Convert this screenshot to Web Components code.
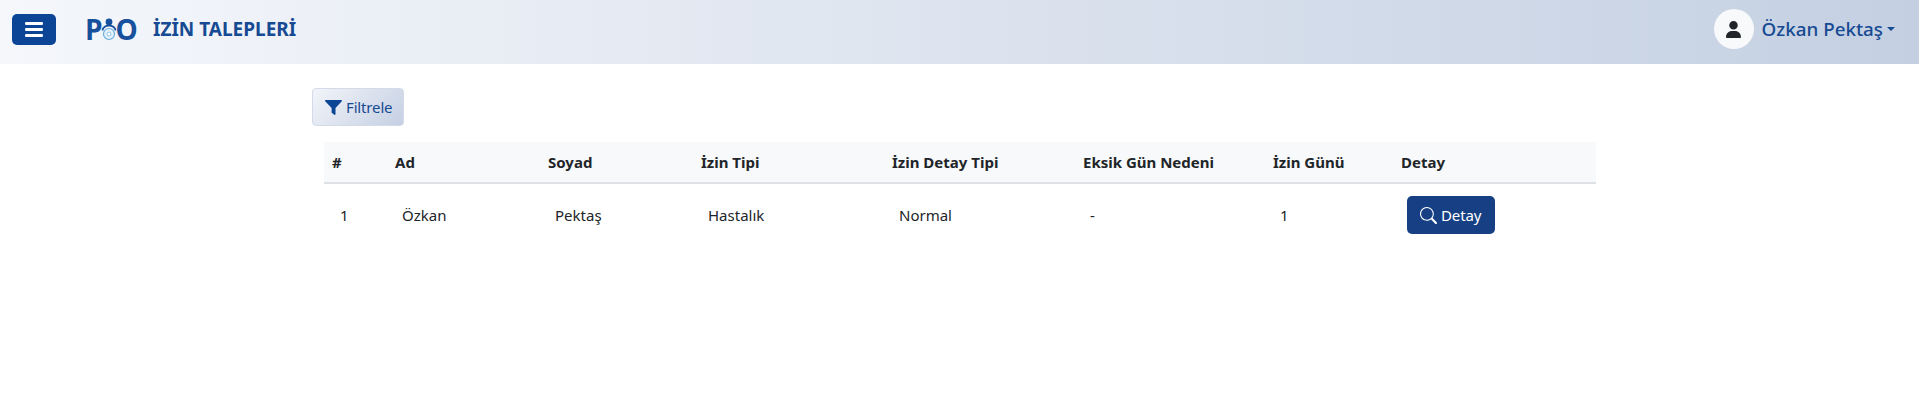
<!DOCTYPE html>
<html lang="tr">
<head>
<meta charset="utf-8">
<title>İzin Talepleri</title>
<style>
    html, body { margin: 0; background: #fff; }
    body { font-family: "Noto Sans", "Open Sans", sans-serif; color: #212529; }
</style>
</head>
<body>
<app-navbar title-text="İZİN TALEPLERİ" user-name="Özkan Pektaş"></app-navbar>
<leave-page></leave-page>

<script>
class AppNavbar extends HTMLElement {
    constructor() {
        super();
        this.attachShadow({ mode: 'open' });
    }

    connectedCallback() {
        this.shadowRoot.innerHTML = `
            <style>
                :host {
                    display: flex;
                    align-items: center;
                    height: 64px;
                    padding: 0 12px 6px;
                    box-sizing: border-box;
                    background: linear-gradient(to right, #f5f7fb, #c4d0e2);
                }
                .menu {
                    width: 44px;
                    height: 31px;
                    background: #0d4596;
                    border-radius: 5px;
                    display: grid;
                    place-items: center;
                    margin-right: 29px;
                }
                .title {
                    margin-left: 16px;
                    font-size: 19px;
                    font-weight: 700;
                    color: #164a92;
                    white-space: nowrap;
                }
                .spacer { flex: 1; }
            </style>
            <div class="menu">
                <svg width="18" height="15" viewBox="0 0 18 15" fill="#fff">
                    <rect y="0" width="18" height="3" rx="1.2"/>
                    <rect y="6" width="18" height="3" rx="1.2"/>
                    <rect y="12" width="18" height="3" rx="1.2"/>
                </svg>
            </div>
            <brand-logo></brand-logo>
            <span class="title">${this.getAttribute('title-text')}</span>
            <span class="spacer"></span>
            <user-menu name="${this.getAttribute('user-name')}"></user-menu>
        `;
    }
}

class BrandLogo extends HTMLElement {
    constructor() {
        super();
        this.attachShadow({ mode: 'open' });
        this.shadowRoot.innerHTML = `
            <style>
                :host {
                    display: inline-flex;
                    align-items: center;
                    height: 30px;
                    width: 52px;
                    color: #17509c;
                    font: 700 28px/30px "Open Sans", "Noto Sans", sans-serif;
                }
                svg { margin: 0 -2px 0 -3px; flex: none; }
            </style>
            <span>P</span>
            <svg width="18" height="24" viewBox="0 0 18 24">
                <circle cx="9" cy="5" r="3.4" fill="#17509c"/>
                <path d="M2.500 13.500a6.500 5 0 0 1 13 0" fill="none" stroke="#17509c" stroke-width="1.800"/>
                <circle cx="9" cy="17" r="5.500" fill="#e4f1fa" stroke="#6aaedd" stroke-width="1.200"/>
                <circle cx="9" cy="17" r="2" fill="#fff" stroke="#8fc2e4"/>
            </svg>
            <span>O</span>
        `;
    }
}

class UserMenu extends HTMLElement {
    constructor() {
        super();
        this.attachShadow({ mode: 'open' });
    }

    connectedCallback() {
        this.shadowRoot.innerHTML = `
            <style>
                :host {
                    display: inline-flex;
                    align-items: center;
                    margin-right: 12px;
                    color: #164a92;
                    font-size: 18.8px;
                    font-weight: 500;
                    white-space: nowrap;
                }
                .avatar {
                    width: 40px;
                    height: 40px;
                    border-radius: 50%;
                    background: #f8f9fa;
                    display: grid;
                    place-items: center;
                    margin-right: 8px;
                }
                .caret {
                    width: 0;
                    height: 0;
                    margin-left: 4px;
                    border-top: 4.500px solid currentColor;
                    border-left: 4.500px solid transparent;
                    border-right: 4.500px solid transparent;
                }
            </style>
            <span class="avatar">
                <svg width="15" height="17" viewBox="0 0 448 512" fill="#212529">
                    <path d="M224 256a128 128 0 1 0 0-256 128 128 0 1 0 0 256zm-45.700 48C79.800 304 0 383.800 0 482.300 0 498.700 13.300 512 29.700 512h388.600c16.400 0 29.700-13.300 29.700-29.700 0-98.500-79.800-178.300-178.300-178.300h-91.400z"/>
                </svg>
            </span>
            <span>${this.getAttribute('name')}</span>
            <span class="caret"></span>
        `;
    }
}

class FilterButton extends HTMLElement {
    constructor() {
        super();
        this.attachShadow({ mode: 'open' });
        this.shadowRoot.innerHTML = `
            <style>
                :host {
                    display: inline-flex;
                    align-items: center;
                    gap: 4px;
                    height: 38px;
                    width: 92px;
                    padding: 0 0 0 12px;
                    box-sizing: border-box;
                    border: 1px solid #d3dbe8;
                    border-radius: 4px;
                    background: linear-gradient(135deg, #f2f4f9, #c5d0e3);
                    color: #164a92;
                    font-size: 15px;
                    letter-spacing: -0.15px;
                }
            </style>
            <svg width="17" height="15" viewBox="0 0 17 15" fill="#0d4596">
                <path d="M0.800 0h15.400c.7 0 1 .8.600 1.300L10.500 8v6.200c0 .6-.7 1-1.200.6l-2.300-1.800c-.2-.2-.4-.4-.4-.7V8L.2 1.300C-.2.800.1 0 .8 0z"/>
            </svg>
            <slot></slot>
        `;
    }
}

class DetailButton extends HTMLElement {
    constructor() {
        super();
        this.attachShadow({ mode: 'open' });
        this.shadowRoot.innerHTML = `
            <style>
                :host {
                    display: inline-flex;
                    align-items: center;
                    gap: 4px;
                    height: 38px;
                    width: 88px;
                    padding: 0 0 0 13px;
                    box-sizing: border-box;
                    border-radius: 5px;
                    background: #174084;
                    color: #fff;
                    font-size: 15px;
                    letter-spacing: -0.1px;
                }
            </style>
            <svg width="17" height="17" viewBox="0 0 16 16" fill="#fff">
                <path d="M11.742 10.344a6.500 6.500 0 1 0-1.397 1.398h-.001c.03.040.062.078.098.115l3.850 3.850a1 1 0 0 0 1.415-1.414l-3.850-3.850a1.007 1.007 0 0 0-.115-.100zM12 6.500a5.500 5.500 0 1 1-11 0 5.500 5.500 0 0 1 11 0z"/>
            </svg>
            <slot></slot>
        `;
    }
}

class LeaveTable extends HTMLElement {
    constructor() {
        super();
        this.attachShadow({ mode: 'open' });
        this.shadowRoot.innerHTML = `
            <style>
                :host { display: block; font-size: 15px; }
                table {
                    width: 100%;
                    table-layout: fixed;
                    border-collapse: separate;
                    border-spacing: 0;
                }
                th {
                    height: 42px;
                    padding: 0 8px;
                    box-sizing: border-box;
                    background: #f8f9fa;
                    border-bottom: 2px solid #dee2e6;
                    text-align: left;
                    font-weight: 700;
                }
                td { padding: 12px 8px 12px 15px; vertical-align: middle; }
                td.num { padding-left: 16px; }
                detail-button { vertical-align: top; margin-left: -1px; }
            </style>
            <table>
                <colgroup>
                    <col style="width:63px"><col style="width:153px"><col style="width:153px">
                    <col style="width:191px"><col style="width:191px"><col style="width:190px">
                    <col style="width:128px"><col>
                </colgroup>
                <thead>
                    <tr>
                        <th>#</th><th>Ad</th><th>Soyad</th><th>İzin Tipi</th>
                        <th>İzin Detay Tipi</th><th>Eksik Gün Nedeni</th><th>İzin Günü</th><th>Detay</th>
                    </tr>
                </thead>
                <tbody>
                    <tr>
                        <td class="num">1</td><td>Özkan</td><td>Pektaş</td><td>Hastalık</td>
                        <td>Normal</td><td>-</td><td>1</td><td><detail-button>Detay</detail-button></td>
                    </tr>
                </tbody>
            </table>
        `;
    }
}

class LeavePage extends HTMLElement {
    constructor() {
        super();
        this.attachShadow({ mode: 'open' });
        this.shadowRoot.innerHTML = `
            <style>
                :host {
                    display: flex;
                    flex-direction: column;
                    align-items: flex-start;
                    width: 1284px;
                    margin: 0 0 0 312px;
                    padding-top: 24px;
                }
                leave-table { align-self: stretch; margin: 16px 0 0 12px; }
            </style>
            <filter-button>Filtrele</filter-button>
            <leave-table></leave-table>
        `;
    }
}

customElements.define('brand-logo', BrandLogo);
customElements.define('user-menu', UserMenu);
customElements.define('app-navbar', AppNavbar);
customElements.define('filter-button', FilterButton);
customElements.define('detail-button', DetailButton);
customElements.define('leave-table', LeaveTable);
customElements.define('leave-page', LeavePage);
</script>
</body>
</html>
